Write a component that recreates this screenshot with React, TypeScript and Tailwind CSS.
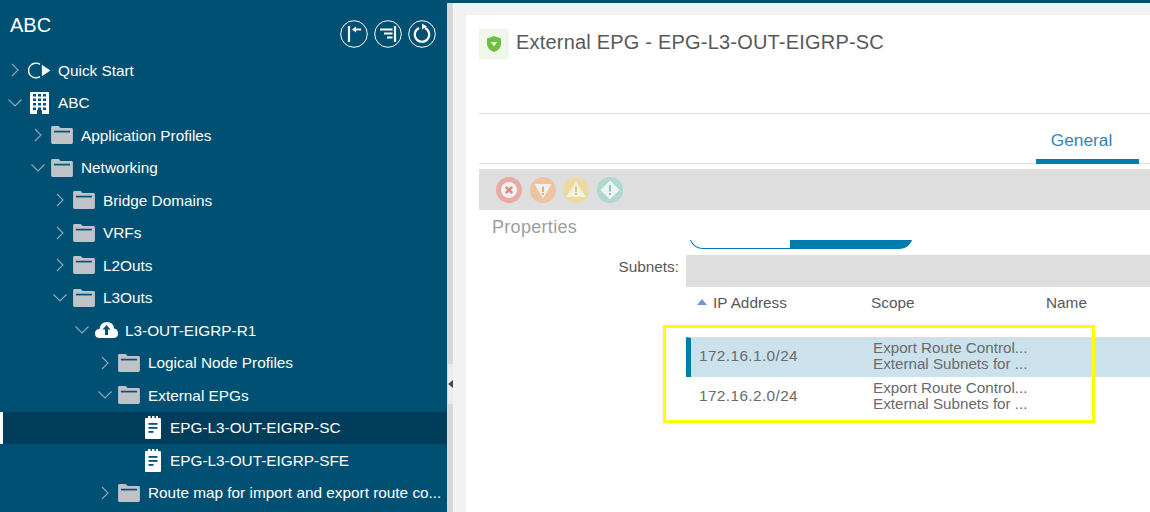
import React from "react";

const Chevron = ({ open }: { open?: boolean }) => (
  <svg width="14" height="14" viewBox="0 0 14 14" fill="none" stroke="#8fa9b8" strokeWidth="1.1" className="shrink-0">
    {open ? <path d="M0.500 3.500L7 10l6.500-6.500" /> : <path d="M4 1l6 6-6 6" />}
  </svg>
);

const Folder = () => (
  <svg width="22" height="18" viewBox="0 0 23 19" className="shrink-0">
    <path d="M0 1.500Q0 0 1.500 0H8l2 2h11.500Q23 2 23 3.500V17.500Q23 19 21.500 19H1.500Q0 19 0 17.500Z" fill="#bfc3c8" />
    <rect x="3" y="5" width="17" height="1.800" fill="#00537a" />
  </svg>
);

const Doc = () => (
  <svg width="16" height="23" viewBox="0 0 16 23" className="shrink-0">
    <path d="M1 2h2V0h2.500v2h1.500V0h2.500v2h1.500V0H13v2h2q1 0 1 1v19q0 1-1 1H1q-1 0-1-1V3q0-1 1-1Z" fill="#fff" />
    <rect x="3.500" y="7" width="9" height="1.800" fill="#00537a" />
    <rect x="3.500" y="11" width="9" height="1.800" fill="#00537a" />
    <rect x="3.500" y="15" width="5" height="1.800" fill="#00537a" />
  </svg>
);

const Building = () => (
  <svg width="19" height="22" viewBox="0 0 19 22" className="shrink-0">
    <path d="M0 0h19v22h-7v-4H7v4H0Z" fill="#fff" />
    {[2, 6.500, 11, 15.500].map((y) =>
      [3, 8, 13].map((x) => <rect key={`${x}-${y}`} x={x} y={y} width="3" height="2.500" fill="#00537a" />)
    )}
  </svg>
);

const Cloud = () => (
  <svg width="23" height="16" viewBox="0 0 23 16" className="shrink-0">
    <path d="M5 16Q0 16 0 11.500T4.500 7Q5.500 0 12 0t7 6.500q4 .5 4 5T18 16Z" fill="#fff" />
    <path d="M11.500 3l4 4.500H13V13h-3V7.500H7.500Z" fill="#00537a" />
  </svg>
);

const Play = () => (
  <svg width="23" height="17" viewBox="0 0 24 18" className="ml-[1px] shrink-0">
    <path d="M12.500 2.500A7.800 7.800 0 1 0 12.500 15.500" fill="none" stroke="#fff" strokeWidth="1.500" />
    <path d="M14.500 3l9 6-9 6Z" fill="#fff" />
  </svg>
);

const rows: { label: string; indent: string; chevron?: "open" | "closed"; icon: React.ReactNode }[] = [
  { label: "Quick Start", indent: "pl-[8px]", chevron: "closed", icon: <Play /> },
  { label: "ABC", indent: "pl-[8px]", chevron: "open", icon: <Building /> },
  { label: "Application Profiles", indent: "pl-[31px]", chevron: "closed", icon: <Folder /> },
  { label: "Networking", indent: "pl-[31px]", chevron: "open", icon: <Folder /> },
  { label: "Bridge Domains", indent: "pl-[53px]", chevron: "closed", icon: <Folder /> },
  { label: "VRFs", indent: "pl-[53px]", chevron: "closed", icon: <Folder /> },
  { label: "L2Outs", indent: "pl-[53px]", chevron: "closed", icon: <Folder /> },
  { label: "L3Outs", indent: "pl-[53px]", chevron: "open", icon: <Folder /> },
  { label: "L3-OUT-EIGRP-R1", indent: "pl-[75px]", chevron: "open", icon: <Cloud /> },
  { label: "Logical Node Profiles", indent: "pl-[98px]", chevron: "closed", icon: <Folder /> },
  { label: "External EPGs", indent: "pl-[98px]", chevron: "open", icon: <Folder /> },
  { label: "EPG-L3-OUT-EIGRP-SC", indent: "pl-[141px] border-l-[3px] border-white bg-[#003d5b]", icon: <Doc /> },
  { label: "EPG-L3-OUT-EIGRP-SFE", indent: "pl-[144px]", icon: <Doc /> },
  { label: "Route map for import and export route co...", indent: "pl-[98px]", chevron: "closed", icon: <Folder /> },
];

const TreeRow = ({ r }: { r: (typeof rows)[number] }) => (
  <div className={`flex h-[32.5px] shrink-0 items-center ${r.indent}`}>
    {r.chevron && (
      <span className="mr-[6px] flex w-[14px] shrink-0 justify-center">
        <Chevron open={r.chevron === "open"} />
      </span>
    )}
    <span className={`mr-[8px] flex shrink-0 justify-center ${r.chevron ? "w-[22px]" : "w-[18px]"}`}>{r.icon}</span>
    <span className="whitespace-nowrap text-[15.35px] text-white">{r.label}</span>
  </div>
);

const Circle = ({ children }: { children: React.ReactNode }) => (
  <svg width="28" height="28" viewBox="0 0 28 28" fill="none" stroke="#fff" className="shrink-0">
    <circle cx="14" cy="14" r="13.300" strokeWidth="1" />
    {children}
  </svg>
);

const Fault = ({ bg, children }: { bg: string; children: React.ReactNode }) => (
  <svg width="26" height="26" viewBox="0 0 26 26" className="shrink-0">
    <circle cx="13" cy="13" r="13" fill={bg} />
    {children}
  </svg>
);

const Sidebar = () => (
  <aside className="flex h-full w-[447px] shrink-0 flex-col overflow-hidden bg-[#005073]">
    <div className="flex h-[54px] shrink-0 items-start justify-between pl-[10px] pr-[11px]">
      <span className="mt-[11px] text-[20px] leading-[28px] text-white">ABC</span>
      <div className="mt-[20px] flex gap-[6px]">
        <Circle>
          <path d="M9 6v16" strokeWidth="2.200" />
          <path d="M21 9.500h-6" strokeWidth="2" />
          <path d="M12 9.500l4-3v6z" fill="#fff" strokeWidth="0" />
        </Circle>
        <Circle>
          <path d="M21 6v16" strokeWidth="2.200" />
          <path d="M6 9.500h12.500M10 13.500h8.500M13 17.500h5.500" strokeWidth="1.800" />
        </Circle>
        <Circle>
          <path d="M11 8A7.200 7.200 0 1 0 17 8" strokeWidth="2.200" />
          <path d="M19 6.500L14 3.500v6z" fill="#fff" strokeWidth="0" />
        </Circle>
      </div>
    </div>
    <div className="flex min-h-0 flex-col">
      {rows.map((r) => (
        <TreeRow key={r.label} r={r} />
      ))}
    </div>
  </aside>
);

const SubnetRow = ({ ip, active }: { ip: string; active?: boolean }) => (
  <div className={`flex h-[40px] items-center text-[#6a6a6d] ${active ? "border-l-[5px] border-t border-[#007cad] border-t-[#dedede] bg-[#cbe2ec] pb-[4px]" : "pb-[2px] pl-[5px]"}`}>
    <div className="w-[182px] shrink-0 pl-[8px] text-[15.35px] tracking-[0.4px]">{ip}</div>
    <div className="w-[170px] shrink-0 text-[15.2px] leading-[16px]">
      <div>Export Route Control...</div>
      <div>External Subnets for ...</div>
    </div>
  </div>
);

const Main = () => (
  <main className="flex h-full min-w-0 flex-1 flex-col bg-[#f2f2f2] pl-[13px] pt-[12px]">
    <div className="relative flex min-h-0 flex-1 flex-col bg-white pl-[13px]">
      <div className="flex h-[98px] shrink-0 items-start pt-[14px]">
        <div className="flex h-[30px] w-[30px] shrink-0 items-center justify-center bg-[#eff7e9]">
          <svg width="14" height="16" viewBox="0 0 14 16">
            <path d="M7 0l7 2.500V8q0 5-7 8-7-3-7-8V2.500Z" fill="#6ebe3f" />
            <path d="M3.800 6h6.400L7 10.500Z" fill="#eff7e9" />
          </svg>
        </div>
        <h1 className="ml-[7px] text-[20px] leading-[26px] font-normal tracking-[0.2px] text-[#58585b]">External EPG - EPG-L3-OUT-EIGRP-SC</h1>
      </div>
      <div className="h-px shrink-0 bg-[#dedede]" />
      <div className="flex h-[50px] shrink-0 justify-end border-b border-[#dedede] pr-[11px]">
        <div className="flex h-[50px] w-[103px] items-center justify-center border-b-[5px] border-[#007cad] pr-[12px] pt-[8px]">
          <span className="text-[17.3px] text-[#2f86b8]">General</span>
        </div>
      </div>
      <div className="mt-[5px] flex h-[41px] shrink-0 items-center gap-[7.500px] bg-[#dedede] pl-[17px]">
        <Fault bg="#e8aaa3">
          <circle cx="13" cy="13" r="8" fill="#f1f1f1" />
          <path d="M9.800 9.800l6.400 6.400M16.200 9.800l-6.400 6.400" stroke="#e0887f" strokeWidth="2.500" />
        </Fault>
        <Fault bg="#eec3a0">
          <path d="M4.500 7h17L13 21.500Z" fill="#f3f0ea" />
          <rect x="12" y="9.500" width="2" height="5.500" fill="#e5ae7f" />
          <rect x="12" y="16" width="2" height="2" fill="#e5ae7f" />
        </Fault>
        <Fault bg="#ecdba0">
          <path d="M13 4.500L22.500 20h-19Z" fill="#f3f1e4" />
          <rect x="12" y="9.500" width="2" height="5.500" fill="#d9c679" />
          <rect x="12" y="16" width="2" height="2" fill="#d9c679" />
        </Fault>
        <Fault bg="#aed8d0">
          <path d="M13 3.500L22.500 13 13 22.500 3.500 13Z" fill="#ecf3f1" />
          <rect x="12" y="8" width="2" height="6.500" fill="#8cc7bc" />
          <rect x="12" y="16" width="2" height="2" fill="#8cc7bc" />
        </Fault>
      </div>
      <div className="flex h-[30px] shrink-0 items-center pl-[13px] pt-[4px]">
        <span className="text-[18px] tracking-[0.3px] text-[#9b9ea3]">Properties</span>
      </div>
      <div className="ml-[210px] flex h-[9px] w-[224px] shrink-0 overflow-hidden">
        <div className="-mt-[10px] h-[19px] w-[101px] rounded-bl-[14px] border-b border-l border-[#007cad]" />
        <div className="-mt-[10px] h-[19px] w-[123px] rounded-br-[14px] bg-[#007cad]" />
      </div>
      <div className="mt-[6px] flex h-[32px] shrink-0">
        <div className="flex w-[207px] shrink-0 items-center justify-end pb-[9px] pr-[7px]">
          <span className="text-[15.35px] text-[#58585b]">Subnets:</span>
        </div>
        <div className="flex-1 bg-[#dedede]" />
      </div>
      <div className="ml-[207px] flex h-[31px] shrink-0 items-center text-[15.35px] text-[#58585b]">
        <div className="flex w-[185px] shrink-0 items-center pl-[11px]">
          <svg width="10" height="6" viewBox="0 0 10 6" className="mr-[6px]"><path d="M5 0l5 6H0Z" fill="#6f97cf" /></svg>
          IP Address
        </div>
        <div className="w-[175px] shrink-0">Scope</div>
        <div>Name</div>
      </div>
      <div className="ml-[207px] mt-[19px] flex flex-col">
        <SubnetRow ip="172.16.1.0/24" active />
        <SubnetRow ip="172.16.2.0/24" />
      </div>
      <div className="absolute left-[197px] top-[310px] h-[98px] w-[432px] border-[3px] border-[#ffff00]" />
    </div>
  </main>
);

export default function App() {
  return (
    <div className="flex h-[512px] w-[1150px] flex-col overflow-hidden bg-[#005073] font-['Liberation_Sans',Arial,sans-serif]">
      <div className="flex min-h-0 flex-1">
        <Sidebar />
        <div className="mt-[3px] flex h-[509px] w-[6px] shrink-0 flex-col items-center bg-[#d9d9d9] pt-[361px]">
          <div className="flex h-[40px] w-[5px] items-center justify-center bg-[#ececec]">
            <svg width="5" height="8" viewBox="0 0 5 8"><path d="M5 0v8L0 4Z" fill="#4a4a4a" /></svg>
          </div>
        </div>
        <div className="mt-[3px] h-[509px] min-w-0 flex-1">
          <Main />
        </div>
      </div>
    </div>
  );
}
